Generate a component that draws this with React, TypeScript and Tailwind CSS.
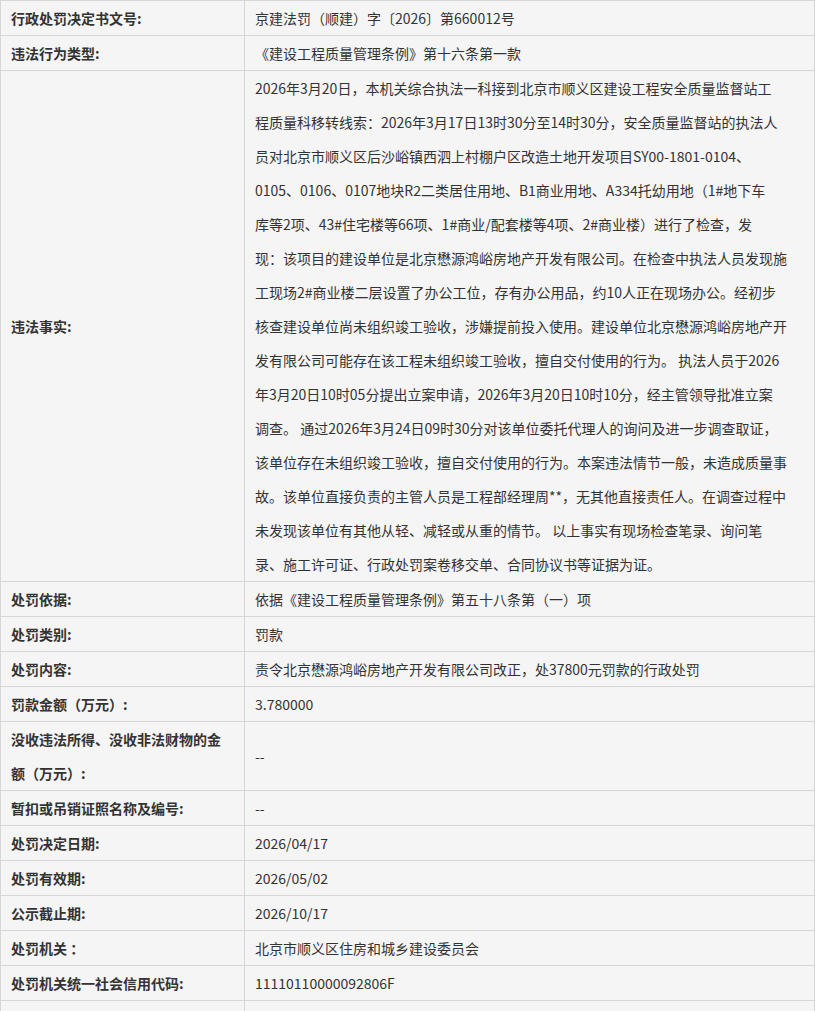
const fact = [
  "2026年3月20日，本机关综合执法一科接到北京市顺义区建设工程安全质量监督站工",
  "程质量科移转线索：2026年3月17日13时30分至14时30分，安全质量监督站的执法人",
  "员对北京市顺义区后沙峪镇西泗上村棚户区改造土地开发项目SY00-1801-0104、",
  "0105、0106、0107地块R2二类居住用地、B1商业用地、A334托幼用地（1#地下车",
  "库等2项、43#住宅楼等66项、1#商业/配套楼等4项、2#商业楼）进行了检查，发",
  "现：该项目的建设单位是北京懋源鸿峪房地产开发有限公司。在检查中执法人员发现施",
  "工现场2#商业楼二层设置了办公工位，存有办公用品，约10人正在现场办公。经初步",
  "核查建设单位尚未组织竣工验收，涉嫌提前投入使用。建设单位北京懋源鸿峪房地产开",
  "发有限公司可能存在该工程未组织竣工验收，擅自交付使用的行为。 执法人员于2026",
  "年3月20日10时05分提出立案申请，2026年3月20日10时10分，经主管领导批准立案",
  "调查。 通过2026年3月24日09时30分对该单位委托代理人的询问及进一步调查取证，",
  "该单位存在未组织竣工验收，擅自交付使用的行为。本案违法情节一般，未造成质量事",
  "故。该单位直接负责的主管人员是工程部经理周**，无其他直接责任人。在调查过程中",
  "未发现该单位有其他从轻、减轻或从重的情节。 以上事实有现场检查笔录、询问笔",
  "录、施工许可证、行政处罚案卷移交单、合同协议书等证据为证。",
];

export default function App() {
  const rows: [string, React.ReactNode][] = [
    ["行政处罚决定书文号:", "京建法罚（顺建）字〔2026〕第660012号"],
    ["违法行为类型:", "《建设工程质量管理条例》第十六条第一款"],
    ["违法事实:", <div>{fact.map((l, i) => <div key={i} className="whitespace-nowrap">{l}</div>)}</div>],
    ["处罚依据:", "依据《建设工程质量管理条例》第五十八条第（一）项"],
    ["处罚类别:", "罚款"],
    ["处罚内容:", "责令北京懋源鸿峪房地产开发有限公司改正，处37800元罚款的行政处罚"],
    ["罚款金额（万元）:", "3.780000"],
    ["没收违法所得、没收非法财物的金额（万元）:", "--"],
    ["暂扣或吊销证照名称及编号:", "--"],
    ["处罚决定日期:", "2026/04/17"],
    ["处罚有效期:", "2026/05/02"],
    ["公示截止期:", "2026/10/17"],
    ["处罚机关 ：", "北京市顺义区住房和城乡建设委员会"],
    ["处罚机关统一社会信用代码:", "11110110000092806F"],
    ["", ""],
  ];
  return (
    <div className="w-[815px] h-[1011px] overflow-hidden bg-[#f5f5f5] text-[14px] leading-[34px] text-[#333]" style={{ fontFamily: '"Noto Sans CJK SC", "Noto Sans", sans-serif' }}>
      <div className="border-t border-l border-[#d6d6d6]">
        {rows.map(([k, v], i) => (
          <div key={i} className="flex border-b border-[#d6d6d6]">
            <div className="w-[244px] shrink-0 border-r border-[#d6d6d6] px-[10px] font-bold flex items-center min-h-[34px]">{k}</div>
            <div className="flex-1 border-r border-[#d6d6d6] pl-[10px] pr-[10px] flex items-center min-h-[34px] break-all overflow-hidden">{v}</div>
          </div>
        ))}
      </div>
    </div>
  );
}
